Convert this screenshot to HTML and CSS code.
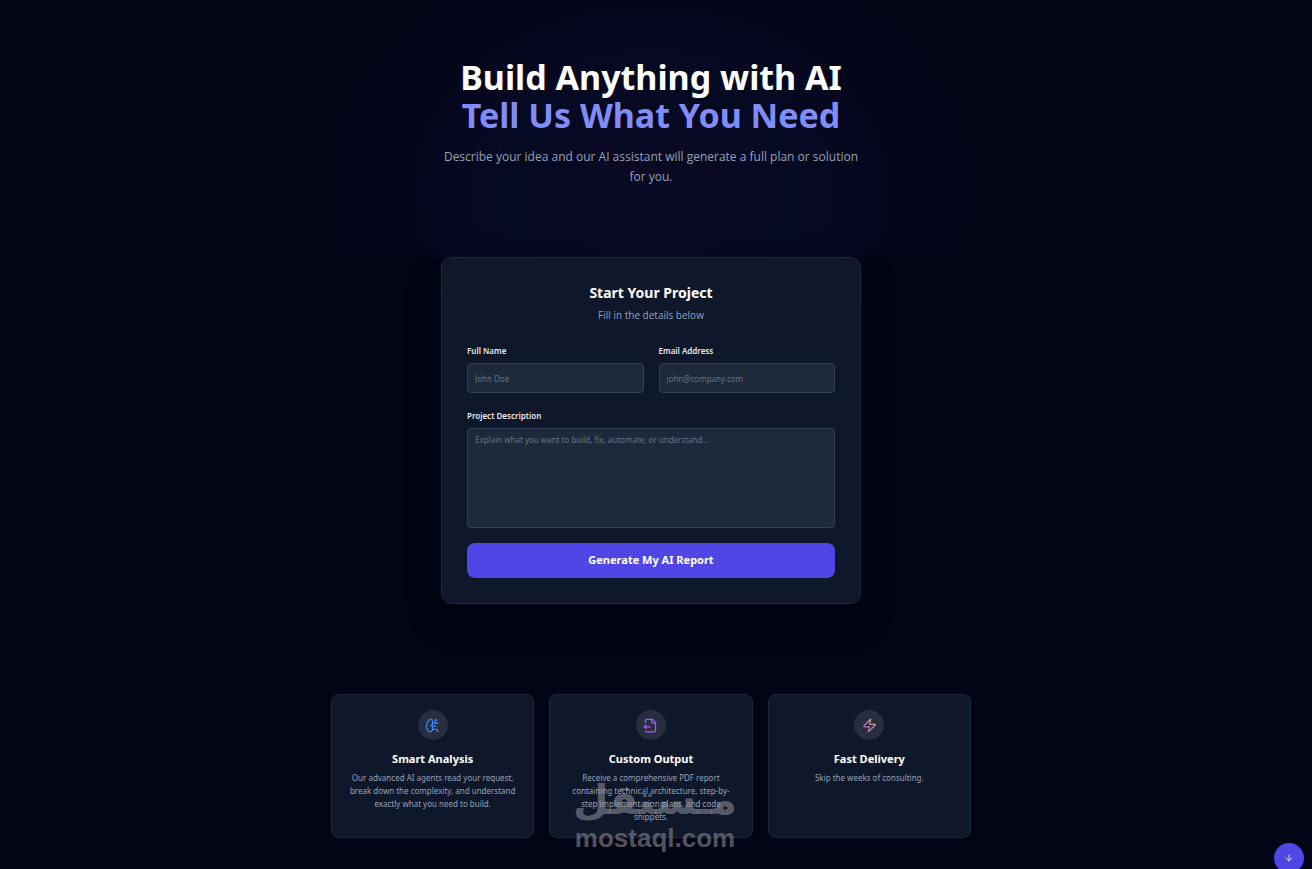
FILE: index.html
```
<!DOCTYPE html>
<html lang="en">
<head>
    <meta charset="UTF-8">
    <meta name="viewport" content="width=device-width, initial-scale=1.0">
    <title>Build Anything with AI</title>
    <link rel="stylesheet" href="styles.css">
</head>
<body>
    <header class="hero">
        <h1 class="hero-title">Build Anything with AI <span>Tell Us What You Need</span></h1>
        <p class="hero-text">Describe your idea and our AI assistant will generate a full plan or solution for you.</p>
    </header>

    <main>
        <form class="project-form">
            <h2>Start Your Project</h2>
            <p class="form-hint">Fill in the details below</p>
            <div class="form-row">
                <div class="input-group">
                    <label for="full-name">Full Name</label>
                    <input type="text" id="full-name" name="full-name" placeholder="John Doe">
                </div>
                <div class="input-group">
                    <label for="email">Email Address</label>
                    <input type="email" id="email" name="email" placeholder="john@company.com">
                </div>
            </div>
            <div class="input-group">
                <label for="description">Project Description</label>
                <textarea id="description" name="description" placeholder="Explain what you want to build, fix, automate, or understand..."></textarea>
            </div>
            <button type="submit" class="submit-btn">Generate My AI Report</button>
        </form>

        <section class="features">
            <article class="feature">
                <div class="feature-icon blue">
                    <svg viewBox="0 0 24 24">
                        <path d="M12 5a3 3 0 1 0-5.997.125 4 4 0 0 0-2.526 5.77 4 4 0 0 0 .556 6.588A4 4 0 1 0 12 18Z"/>
                        <path d="M9 13a4.5 4.5 0 0 0 3-4"/>
                        <path d="M12 13h4"/>
                        <path d="M12 18h6a2 2 0 0 1 2 2v1"/>
                        <path d="M12 8h8"/>
                        <path d="M16 8V5a2 2 0 0 1 2-2"/>
                        <circle cx="16" cy="13" r=".5"/>
                        <circle cx="18" cy="3" r=".5"/>
                        <circle cx="20" cy="21" r=".5"/>
                        <circle cx="20" cy="8" r=".5"/>
                    </svg>
                </div>
                <h3>Smart Analysis</h3>
                <p>Our advanced AI agents read your request, break down the complexity, and understand exactly what you need to build.</p>
            </article>
            <article class="feature">
                <div class="feature-icon purple">
                    <svg viewBox="0 0 24 24">
                        <path d="M14 2v4a2 2 0 0 0 2 2h4"/>
                        <path d="M4 7V4a2 2 0 0 1 2-2h9l5 5v13a2 2 0 0 1-2 2H6a2 2 0 0 1-2-1"/>
                        <path d="m5 11-3 3"/>
                        <path d="m5 17-3-3h10"/>
                    </svg>
                </div>
                <h3>Custom Output</h3>
                <p>Receive a comprehensive PDF report containing technical architecture, step-by-step implementation plans, and code snippets.</p>
            </article>
            <article class="feature">
                <div class="feature-icon">
                    <svg viewBox="0 0 24 24">
                        <defs>
                            <linearGradient id="zap" x1="0" y1="1" x2="1" y2="0">
                                <stop offset="0" stop-color="#a855c7"/>
                                <stop offset="0.5" stop-color="#c084a8"/>
                                <stop offset="1" stop-color="#fdba74"/>
                            </linearGradient>
                        </defs>
                        <path stroke="url(#zap)" d="M4 14a1 1 0 0 1-.78-1.63l9.9-10.2a.5.5 0 0 1 .86.46l-1.92 6.02A1 1 0 0 0 13 10h7a1 1 0 0 1 .78 1.63l-9.9 10.2a.5.5 0 0 1-.86-.46l1.92-6.02A1 1 0 0 0 11 14z"/>
                    </svg>
                </div>
                <h3>Fast Delivery</h3>
                <p>Skip the weeks of consulting.</p>
            </article>
        </section>
    </main>

    <div class="watermark">
        <span class="watermark-ar" lang="ar" dir="rtl">مـستقل</span>
        <span class="watermark-en">mostaql.com</span>
    </div>

    <button type="button" class="scroll-btn" aria-label="Scroll down">
        <svg viewBox="0 0 24 24">
            <path d="M12 5v14"/>
            <path d="m19 12-7 7-7-7"/>
        </svg>
    </button>
</body>
</html>
```
FILE: styles.css
```
* {
    box-sizing: border-box;
}
body {
    font-family: "Noto Sans", "Open Sans", sans-serif;
    background-color: #020515;
    color: #fff;
    margin: 0;
    padding-right: 10px;
    min-height: 100vh;
    overflow: hidden;
    position: relative;
}
h1, h2, h3, p {
    margin: 0;
}
svg {
    fill: none;
    stroke: currentColor;
    stroke-width: 2;
    stroke-linecap: round;
    stroke-linejoin: round;
}

.hero {
    padding: 58px 20px 70px;
    text-align: center;
    background: radial-gradient(ellipse 350px 270px at 50% 190px, #0a0a24, #060922 45%, #020515);
}
.hero-title {
    font-size: 34px;
    line-height: 38px;
    font-weight: 700;
}
.hero-title span {
    display: block;
    color: #818cf8;
}
.hero-text {
    max-width: 420px;
    margin: 13px auto 0;
    font-family: "Open Sans", sans-serif;
    font-size: 12px;
    line-height: 20px;
    color: #94a3b8;
}

.project-form {
    max-width: 420px;
    margin: 0 auto;
    padding: 25px;
    background-color: #0f172a;
    border: 1px solid #1e293b;
    border-radius: 10px;
    box-shadow: 0 16px 32px rgba(0, 0, 0, 0.4);
}
.project-form h2 {
    font-size: 14px;
    line-height: 20px;
    text-align: center;
}
.form-hint {
    margin: 5px 0 21px;
    font-family: "Open Sans", sans-serif;
    font-size: 10px;
    line-height: 14px;
    text-align: center;
    color: #94a3b8;
}
.form-row {
    display: grid;
    grid-template-columns: 1fr 1fr;
    gap: 15px;
}
.input-group {
    margin-bottom: 15px;
}
.input-group label {
    display: block;
    margin-bottom: 5px;
    font-size: 8px;
    line-height: 15px;
    font-weight: 600;
    color: #e2e8f0;
}
.input-group input,
.input-group textarea {
    display: block;
    width: 100%;
    height: 30px;
    padding: 4px 7px;
    font-family: inherit;
    font-size: 8px;
    line-height: 13px;
    color: #fff;
    background-color: #1e293b;
    border: 1px solid #334155;
    border-radius: 4px;
}
.input-group textarea {
    height: 100px;
    resize: none;
}
.input-group ::placeholder {
    color: #64748b;
}
.submit-btn {
    display: block;
    width: 100%;
    height: 35px;
    padding: 0 0 2px;
    font-family: inherit;
    font-size: 11px;
    font-weight: 700;
    color: #fff;
    background-color: #4f46e5;
    border: none;
    border-radius: 8px;
    cursor: pointer;
}

.features {
    display: grid;
    grid-template-columns: repeat(3, 1fr);
    gap: 15px;
    max-width: 640px;
    margin: 90px auto 0;
}
.feature {
    padding: 15px 15px 14px;
    text-align: center;
    background-color: #0f172a;
    border: 1px solid #1e293b;
    border-radius: 8px;
}
.feature-icon {
    display: flex;
    align-items: center;
    justify-content: center;
    width: 30px;
    height: 30px;
    margin: 0 auto 10px;
    border-radius: 50%;
    background-color: #272e40;
}
.feature-icon svg {
    width: 15px;
    height: 15px;
}
.blue {
    color: #3b82f6;
}
.purple {
    color: #a855f7;
}
.feature h3 {
    margin-bottom: 3px;
    font-size: 11px;
    line-height: 18px;
}
.feature p {
    font-size: 8px;
    line-height: 13px;
    color: #94a3b8;
}

.watermark {
    position: absolute;
    top: 776px;
    left: 0;
    right: 2px;
    display: flex;
    flex-direction: column;
    align-items: center;
    color: rgba(150, 150, 155, 0.55);
    font-weight: 700;
    pointer-events: none;
}
.watermark-ar {
    font-family: "DejaVu Sans", sans-serif;
    font-size: 41px;
    line-height: 48px;
}
.watermark-en {
    font-family: "Liberation Sans", sans-serif;
    font-size: 26px;
    line-height: 28px;
}

.scroll-btn {
    position: fixed;
    right: 8px;
    bottom: -4px;
    display: flex;
    align-items: center;
    justify-content: center;
    width: 30px;
    height: 30px;
    padding: 0;
    color: #fff;
    background-color: #4f46e5;
    border: none;
    border-radius: 50%;
    cursor: pointer;
}
.scroll-btn svg {
    width: 10px;
    height: 10px;
}
```
